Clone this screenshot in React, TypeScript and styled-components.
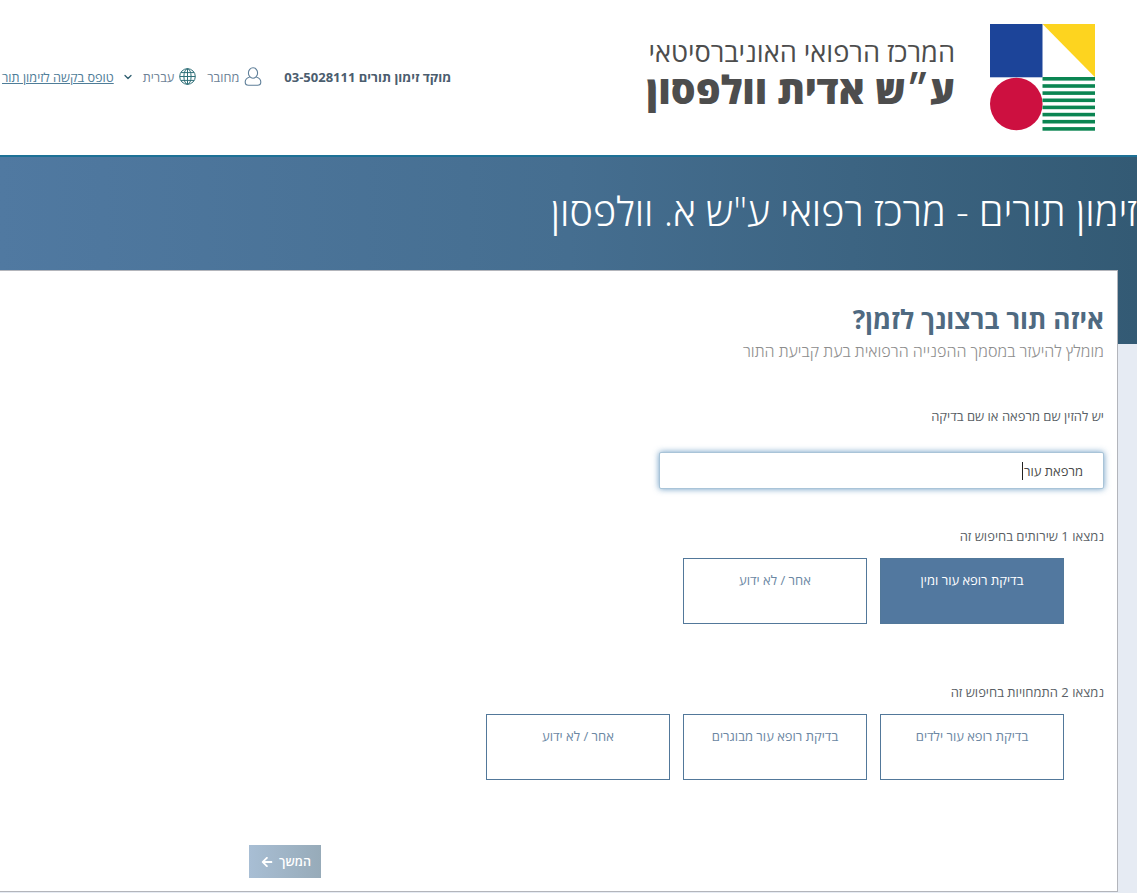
import React from 'react';
import styled, { createGlobalStyle } from 'styled-components';
import { FaArrowLeft } from 'react-icons/fa';
import { ChevronDown } from 'lucide-react';

const GlobalStyle = createGlobalStyle`
  html, body {
    margin: 0;
    padding: 0;
    background: #e6ebf3;
    overflow: hidden;
  }
  body {
    font-family: "Open Sans", "Noto Sans", "Liberation Sans", sans-serif;
  }
`;

const Page = styled.div`
  direction: rtl;
  width: 1137px;
  height: 893px;
  overflow: hidden;
`;

const Header = styled.header`
  display: flex;
  align-items: center;
  height: 155px;
  padding: 0 42px 0 2px;
  background: #fff;
`;

const LogoText = styled.div`
  display: flex;
  flex-direction: column;
  margin-right: 35px;
  padding-bottom: 10px;
  color: #4d4d4d;
  white-space: nowrap;
`;

const LogoTop = styled.span`
  font-size: 27.2px;
  font-weight: 400;
  line-height: 32px;
`;

const LogoBottom = styled.span`
  font-size: 39px;
  font-weight: 800;
  line-height: 42px;
`;

const Nav = styled.nav`
  display: flex;
  align-items: center;
  margin-right: auto;
  padding-bottom: 2px;
  font-size: 12.7px;
  white-space: nowrap;
`;

const Hotline = styled.span`
  font-size: 13px;
  font-weight: 700;
  color: #4b5d6e;
  margin-left: 22px;
`;

const NavItem = styled.span`
  display: flex;
  align-items: center;
  gap: ${props => props.$inner}px;
  color: #6d8296;
  margin-left: ${props => props.$gap}px;
`;

const FormLink = styled.a`
  color: #4f7d98;
  text-decoration: underline;
`;

const Banner = styled.div`
  height: 187px;
  border-top: 2px solid #1d7196;
  background: linear-gradient(90deg, #5079a1 0%, #456e90 50%, #335a74 100%);
`;

const BannerTitle = styled.h1`
  margin: 0;
  padding-top: 26px;
  font-size: 39.6px;
  font-weight: 300;
  line-height: 57px;
  color: #fff;
  white-space: nowrap;
`;

const Card = styled.main`
  margin: -74px 19px 0 -6px;
  height: 622px;
  padding: 30px 13px 0 0;
  background: #fff;
  border: 1px solid #b3b5bb;
  box-sizing: border-box;
`;

const Heading = styled.h2`
  margin: 0;
  font-size: 26.2px;
  font-weight: 700;
  line-height: 36px;
  color: #4f6a81;
`;

const SubHeading = styled.p`
  margin: 2px 0 0;
  font-size: 16.1px;
  font-weight: 300;
  line-height: 24px;
  color: #8d8d8d;
`;

const FieldLabel = styled.div`
  margin-top: ${props => props.$top}px;
  font-size: 13px;
  line-height: 18px;
  color: #5a5f66;
`;

const SearchBox = styled.div`
  display: flex;
  align-items: center;
  width: 445px;
  height: 37px;
  margin-top: 27px;
  padding-right: 20px;
  box-sizing: border-box;
  background: #fff;
  border: 1px solid #a9c4d8;
  border-radius: 2px;
  box-shadow: 0 0 6px rgba(70, 130, 180, 0.8);
  font-size: 13px;
  color: #4a4a4a;
`;

const Caret = styled.span`
  width: 1px;
  height: 18px;
  margin-right: 1px;
  background: #222;
`;

const OptionRow = styled.div`
  display: flex;
  gap: 13px;
  margin: 13px 40px 0 0;
`;

const Option = styled.button`
  display: flex;
  align-items: flex-start;
  justify-content: center;
  width: 184px;
  height: 66px;
  padding: 12px 8px 0;
  box-sizing: border-box;
  font-family: inherit;
  font-size: 13px;
  line-height: 18px;
  font-weight: ${props => (props.$selected ? 500 : 400)};
  color: ${props => (props.$selected ? '#fff' : '#6b87a3')};
  background: ${props => (props.$selected ? '#52789f' : '#fff')};
  border: 1px solid #52789a;
  border-radius: 0;
`;

const NextRow = styled.div`
  display: flex;
  margin: 65px 783px 0 0;
`;

const NextButton = styled.button`
  display: flex;
  align-items: center;
  justify-content: center;
  gap: 6px;
  width: 72px;
  height: 33px;
  padding: 0 0 0 2px;
  font-family: inherit;
  font-size: 12.5px;
  font-weight: 600;
  color: #fff;
  background: linear-gradient(90deg, #a8bed4 0%, #97abb9 100%);
  border: none;
`;

const Logo = () => (
  <svg width="105" height="107" viewBox="0 0 105 107" style={{ flexShrink: 0 }}>
    <rect x="0" y="0" width="52.5" height="53.3" fill="#1c4499" />
    <polygon points="52.5,0 105,0 105,53.3" fill="#fdd41f" />
    <circle cx="26.3" cy="80" r="26.3" fill="#cd1040" />
    {[54.8, 62, 69.1, 76.3, 83.4, 90.6, 97.7, 104.9].map(y => (
      <rect key={y} x="52.5" y={y - 1.8} width="52.5" height="3.6" fill="#0b8552" />
    ))}
  </svg>
);

const UserIcon = () => (
  <svg width="18" height="19" viewBox="0 0 18 19" fill="none" stroke="#5f7f99" strokeWidth="1.1">
    <ellipse cx="9" cy="6" rx="4.6" ry="5.2" />
    <path d="M5.6 10.2C3 10.8 1.2 12.6 1.2 15c0 2 1.4 3.3 3.3 3.3h9c1.9 0 3.3-1.3 3.3-3.3 0-2.4-1.8-4.2-4.4-4.8" />
  </svg>
);

const GlobeIcon = () => (
  <svg width="17" height="17" viewBox="0 0 17 17" fill="none" stroke="#2f6f78" strokeWidth="1">
    <circle cx="8.5" cy="8.5" r="7.8" />
    <ellipse cx="8.5" cy="8.5" rx="3.6" ry="7.8" />
    <path d="M8.5 0.7v15.6M0.7 8.5h15.6M1.8 4.6h13.4M1.8 12.4h13.4" />
  </svg>
);

const App: React.FC = () => {
  return (
    <Page>
      <GlobalStyle />
      <Header>
        <Logo />
        <LogoText>
          <LogoTop>המרכז הרפואי האוניברסיטאי</LogoTop>
          <LogoBottom>ע״ש אדית וולפסון</LogoBottom>
        </LogoText>
        <Nav>
          <Hotline>מוקד זימון תורים 03-5028111</Hotline>
          <NavItem $gap={11} $inner={5}>
            <UserIcon />
            מחובר
          </NavItem>
          <NavItem $gap={9} $inner={5}>
            <GlobeIcon />
            עברית
          </NavItem>
          <NavItem $gap={8} $inner={0}>
            <ChevronDown size={12} color="#2f5f70" strokeWidth={2.6} />
          </NavItem>
          <FormLink>טופס בקשה לזימון תור</FormLink>
        </Nav>
      </Header>
      <Banner>
        <BannerTitle>זימון תורים - מרכז רפואי ע"ש א. וולפסון</BannerTitle>
      </Banner>
      <Card>
        <Heading>איזה תור ברצונך לזמן?</Heading>
        <SubHeading>מומלץ להיעזר במסמך ההפנייה הרפואית בעת קביעת התור</SubHeading>
        <FieldLabel $top={44}>יש להזין שם מרפאה או שם בדיקה</FieldLabel>
        <SearchBox>
          מרפאת עור
          <Caret />
        </SearchBox>
        <FieldLabel $top={38}>נמצאו 1 שירותים בחיפוש זה</FieldLabel>
        <OptionRow>
          <Option $selected>בדיקת רופא עור ומין</Option>
          <Option>אחר / לא ידוע</Option>
        </OptionRow>
        <FieldLabel $top={59}>נמצאו 2 התמחויות בחיפוש זה</FieldLabel>
        <OptionRow>
          <Option>בדיקת רופא עור ילדים</Option>
          <Option>בדיקת רופא עור מבוגרים</Option>
          <Option>אחר / לא ידוע</Option>
        </OptionRow>
        <NextRow>
          <NextButton>
            המשך
            <FaArrowLeft size={12} />
          </NextButton>
        </NextRow>
      </Card>
    </Page>
  );
};

export default App;
